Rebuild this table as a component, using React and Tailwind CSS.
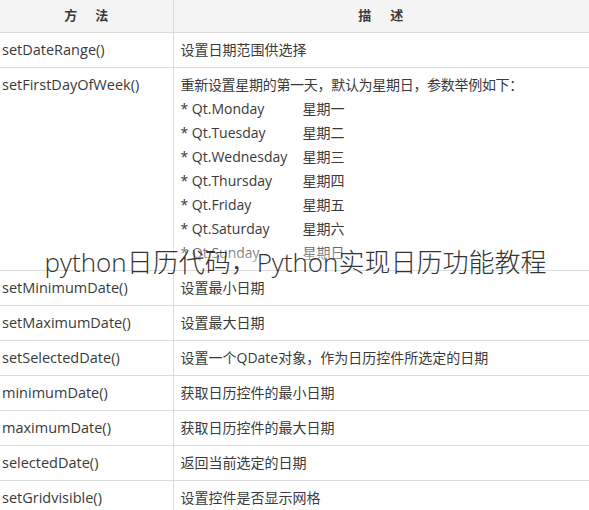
import React from 'react';

const days = [
  ['* Qt.Monday', '星期一'],
  ['* Qt.Tuesday', '星期二'],
  ['* Qt.Wednesday', '星期三'],
  ['* Qt.Thursday', '星期四'],
  ['* Qt.Friday', '星期五'],
  ['* Qt.Saturday', '星期六'],
  ['* Qt.Sunday', '星期日'],
];

const rows = [
  ['setMinimumDate()', '设置最小日期'],
  ['setMaximumDate()', '设置最大日期'],
  ['setSelectedDate()', '设置一个QDate对象，作为日历控件所选定的日期'],
  ['minimumDate()', '获取日历控件的最小日期'],
  ['maximumDate()', '获取日历控件的最大日期'],
  ['selectedDate()', '返回当前选定的日期'],
  ['setGridvisible()', '设置控件是否显示网格'],
];

const font = { fontFamily: '"Open Sans", "Noto Sans CJK SC", sans-serif' };

const App = () => {
  return (
    <div className="relative w-[589px] h-[510px] overflow-hidden bg-white text-[#3a3a3a]" style={font}>
      <table className="w-[620px] border-collapse text-[14px]">
        <thead>
          <tr className="h-[32px] bg-[#f4f4f4]">
            <th className="w-[173px] border border-[#dcdcdc] border-l-0 border-t-0 font-bold text-[13px] text-center">
              方<span className="inline-block w-[18px]" />法
            </th>
            <th className="border border-[#dcdcdc] border-t-0 font-bold text-[13px] text-center pr-[31px]">
              描<span className="inline-block w-[19px]" />述
            </th>
          </tr>
        </thead>
        <tbody>
          <tr className="h-[35px]">
            <td className="border border-[#dcdcdc] border-l-0 pl-[2px] text-[14.5px]">setDateRange()</td>
            <td className="border border-[#dcdcdc] pl-[7px]">设置日期范围供选择</td>
          </tr>
          <tr className="h-[202px]">
            <td className="border border-[#dcdcdc] border-l-0 pl-[2px] pt-[5px] align-top text-[14.5px] leading-[24px]">setFirstDayOfWeek()</td>
            <td className="border border-[#dcdcdc] pl-[7px] py-[5px] align-top leading-[24px]">
              <div className="tracking-[-0.3px]">重新设置星期的第一天，默认为星期日，参数举例如下：</div>
              {days.map(([a, b]) => (
                <div key={a} className="flex">
                  <span className="w-[122px]">{a}</span>
                  <span>{b}</span>
                </div>
              ))}
            </td>
          </tr>
          {rows.map(([a, b]) => (
            <tr key={a} className="h-[35px]">
              <td className="border border-[#dcdcdc] border-l-0 pl-[2px] text-[14.5px]">{a}</td>
              <td className="border border-[#dcdcdc] pl-[7px]">{b}</td>
            </tr>
          ))}
        </tbody>
      </table>
      <div className="absolute left-0 right-0 top-[238px] h-[31px] bg-gradient-to-b from-white/0 to-white/75" />
      <div className="absolute left-0 right-0 top-[244px] text-center text-[26px] leading-[36px] font-light text-[#333] pl-[2px]">
        python日历代码，Python实现日历功能教程
      </div>
    </div>
  );
};

export default App;
